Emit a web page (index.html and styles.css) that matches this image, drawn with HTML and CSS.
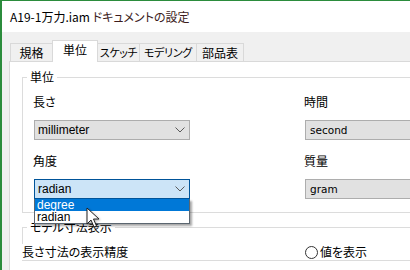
FILE: index.html
```html
<!DOCTYPE html>
<html lang="ja">
<head>
  <meta charset="UTF-8">
  <title>ドキュメントの設定</title>
  <link rel="stylesheet" href="styles.css">
</head>
<body>
  <div class="window">
    <div class="titlebar">A19-1万力.iam <span class="title-doc">ドキュメントの設定</span></div>

    <div class="dialog">
      <ul class="tabs">
        <li class="tab tab-1">規格</li>
        <li class="tab tab-2 tab-active">単位</li>
        <li class="tab tab-3">スケッチ</li>
        <li class="tab tab-4">モデリング</li>
        <li class="tab tab-5">部品表</li>
      </ul>

      <div class="panel">
        <fieldset class="group">
          <legend>単位</legend>
          <div class="grid">
            <div class="field">
              <div class="field-label">長さ</div>
              <div class="combo">
                <span>millimeter</span>
                <svg class="chevron" width="10" height="6" viewBox="0 0 10 6"><path d="M0.5 0.5 L5 5 L9.5 0.5" fill="none" stroke="#5a5a5a"/></svg>
              </div>
            </div>
            <div class="field">
              <div class="field-label">時間</div>
              <div class="combo combo-plain">second</div>
            </div>
            <div class="field field-open">
              <div class="field-label">角度</div>
              <div class="combo combo-focus">
                <span>radian</span>
                <svg class="chevron" width="10" height="6" viewBox="0 0 10 6"><path d="M0.5 0.5 L5 5 L9.5 0.5" fill="none" stroke="#5a5a5a"/></svg>
              </div>
              <!-- 開いているドロップダウン -->
              <ul class="droplist">
                <li class="drop-item drop-item-sel">degree</li>
                <li class="drop-item">radian</li>
              </ul>
              <svg class="cursor" width="14" height="22" viewBox="0 0 14 22">
                <path d="M1 1 L1 17 L5 13 L8 20 L10.5 19 L7.5 12 L13 12 Z" fill="#fff" stroke="#222" stroke-width="1" stroke-linejoin="round"/>
              </svg>
            </div>
            <div class="field">
              <div class="field-label">質量</div>
              <div class="combo combo-plain">gram</div>
            </div>
          </div>
        </fieldset>

        <fieldset class="group group-model">
          <legend>モデル寸法表示</legend>
          <div class="grid">
            <div class="row-label">長さ寸法の表示精度</div>
            <div class="radio"><span class="radio-circle"></span>値を表示</div>
          </div>
        </fieldset>
      </div>
    </div>
  </div>
</body>
</html>
```

FILE: styles.css
```css
* {
    box-sizing: border-box;
}

body {
    margin: 0;
    font-family: "Noto Sans CJK JP", sans-serif;
    font-size: 12px;
    font-feature-settings: "palt";
    color: #000;
}

/******************* ウィンドウ *******************/

.window {
    width: 410px;
    height: 270px;
    overflow: hidden;
    border-top: 1px solid #2b8c3c;
    border-left: 2px solid #2b8c3c;
    background: #fff;
}

.titlebar {
    height: 31px;
    line-height: 31px;
    padding-left: 8px;
    font-size: 12px;
}

.title-doc {
    color: #3c1c1c;
}

.dialog {
    background: #f0f0f0;
    height: 240px;
    overflow: hidden;
}

/******************* タブ *******************/

.tabs {
    display: flex;
    align-items: flex-end;
    height: 29px;
    margin: 0;
    padding: 8px 0 0 8px;
    list-style: none;
}

.tab {
    height: 18px;
    line-height: 17px;
    margin-left: -1px;
    border: 1px solid #d9d9d9;
    border-bottom: none;
    background: #f0f0f0;
    text-align: center;
    white-space: nowrap;
    overflow: hidden;
}

.tab-1 { width: 43px; margin-left: 0; }
.tab-2 { width: 46px; }
.tab-3 { width: 43px; font-size: 11px; letter-spacing: -0.4px; }
.tab-4 { width: 58px; font-size: 11px; letter-spacing: -0.3px; }
.tab-5 { width: 48px; }

.tab-active {
    position: relative;
    z-index: 1;
    height: 22px;
    line-height: 18px;
    margin-bottom: -1px;
    background: #fff;
}

/******************* パネル *******************/

.panel {
    width: 440px;
    height: 220px;
    margin-left: 7px;
    padding-left: 12px;
    border: 1px solid #d9d9d9;
    background: #fff;
}

.group {
    margin: 7px 0 0;
    padding: 0 0 13px 11px;
    border: 1px solid #dcdcdc;
    min-width: 0;
}

.group legend {
    margin-left: -7px;
    padding: 0 3px;
    line-height: 16px;
}

.group-model {
    margin-top: 6px;
    padding-bottom: 0;
}

.grid {
    display: grid;
    grid-template-columns: 156px 160px;
    column-gap: 115px;
    row-gap: 13px;
    padding-top: 9px;
}

.field {
    position: relative;
}

.field-label {
    line-height: 16px;
    height: 16px;
    margin-bottom: 10px;
    margin-left: -1px;
}

/******************* コンボボックス *******************/

.combo {
    display: flex;
    align-items: center;
    justify-content: space-between;
    height: 20px;
    padding: 0 3px 0 3px;
    border: 1px solid #adadad;
    background: #e1e1e1;
    font-family: "Liberation Sans", sans-serif;
    font-size: 12px;
}

.chevron {
    margin-right: 1px;
}

.combo-focus {
    background: #cce4f7;
    border-color: #005499;
}

.combo-plain {
    padding-left: 4px;
    font-family: "DejaVu Sans", sans-serif;
    font-size: 10.5px;
}

.droplist {
    position: absolute;
    top: 100%;
    left: 0;
    z-index: 2;
    width: 156px;
    margin: 0;
    padding: 0;
    list-style: none;
    border: 1px solid #5b6670;
    border-top: none;
    background: #fff;
    box-shadow: 2px 2px 2px rgba(0, 0, 0, 0.35);
    font-family: "Liberation Sans", sans-serif;
    font-size: 12px;
}

.drop-item {
    height: 12px;
    line-height: 12px;
    padding-left: 2px;
}

.drop-item-sel {
    background: #0078d7;
    color: #fff;
}

.cursor {
    position: absolute;
    left: 52px;
    top: 54px;
    z-index: 3;
    filter: drop-shadow(1px 1px 1px rgba(0, 0, 0, 0.3));
}

/******************* モデル寸法表示 *******************/

.row-label {
    margin-left: -12px;
    line-height: 16px;
    background: #fff;
    white-space: nowrap;
}

.radio {
    display: flex;
    align-items: center;
    line-height: 16px;
}

.radio-circle {
    width: 13px;
    height: 13px;
    margin-right: 2px;
    border: 1px solid #333;
    border-radius: 50%;
    background: #fff;
}
```
